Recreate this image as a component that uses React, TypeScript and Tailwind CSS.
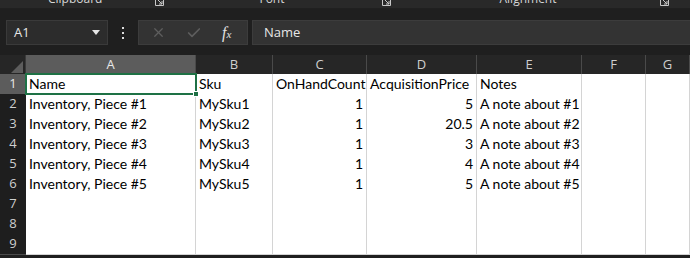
import { Check, X } from "lucide-react";

const COLS = ["A", "B", "C", "D", "E", "F", "G"];

const ROWS: string[][] = [
  ["Name", "Sku", "OnHandCount", "AcquisitionPrice", "Notes", "", ""],
  ["Inventory, Piece #1", "MySku1", "1", "5", "A note about #1", "", ""],
  ["Inventory, Piece #2", "MySku2", "1", "20.5", "A note about #2", "", ""],
  ["Inventory, Piece #3", "MySku3", "1", "3", "A note about #3", "", ""],
  ["Inventory, Piece #4", "MySku4", "1", "4", "A note about #4", "", ""],
  ["Inventory, Piece #5", "MySku5", "1", "5", "A note about #5", "", ""],
  ["", "", "", "", "", "", ""],
  ["", "", "", "", "", "", ""],
  ["", "", "", "", "", "", ""],
];

const GRID = "grid grid-cols-[26px_170px_77px_94px_110px_105px_64px_1fr]";

function isNumber(v: string) {
  return v !== "" && !isNaN(Number(v));
}

// little dialog launcher square in the ribbon group footer
function Launcher() {
  return (
    <svg width="9" height="9" viewBox="0 0 9 9" className="text-[#c8c8c8]">
      <path d="M0.5 0.5h8v8h-8z" fill="none" stroke="currentColor" />
      <path d="M3 3l4 4M7 4v3H4" fill="none" stroke="currentColor" />
    </svg>
  );
}

export default function App() {
  return (
    <div className="w-[690px] h-[258px] overflow-hidden bg-[#1f1f1f] font-['Open_Sans',sans-serif] select-none">
      {/* ribbon group labels, cut off at the top */}
      <div className="relative h-[9px] bg-[#292929] overflow-hidden text-[#d6d6d6] border-b border-[#202020]">
        <div className="flex items-start h-full">
          <span className="ml-[48px] -mt-[7px] text-[12px] leading-[12px]">Clipboard</span>
          <span className="ml-[53px] -mt-[3px]"><Launcher /></span>
          <span className="ml-[95px] -mt-[7px] text-[12px] leading-[12px]">Font</span>
          <span className="ml-[97px] -mt-[3px]"><Launcher /></span>
          <span className="ml-[109px] -mt-[7px] text-[12px] leading-[12px]">Alignment</span>
          <span className="ml-[103px] -mt-[3px]"><Launcher /></span>
        </div>
      </div>

      {/* formula bar */}
      <div className="flex items-center h-[46px] pt-[1px]">
        <div className="ml-[6px] w-[102px] h-[25px] bg-[#2c2c2c] border border-[#3a3a3a] flex items-center justify-between pl-[7px] pr-[7px] text-[#e6e6e6] text-[13px]">
          <span>A1</span>
          <svg width="8" height="5" viewBox="0 0 8 5">
            <path d="M0 0h8L4 5z" fill="#e6e6e6" />
          </svg>
        </div>
        <div className="w-[30px] flex flex-col items-center gap-[3px]">
          <div className="w-[2px] h-[2px] bg-[#dcdcdc]" />
          <div className="w-[2px] h-[2px] bg-[#dcdcdc]" />
          <div className="w-[2px] h-[2px] bg-[#dcdcdc]" />
        </div>
        <div className="w-[110px] h-[25px] bg-[#333333] border border-[#3c3c3c] flex items-center">
          <X size={15} strokeWidth={2} className="ml-[12px] text-[#5e5e5e]" />
          <Check size={16} strokeWidth={2.5} className="ml-[20px] text-[#5e5e5e]" />
          <span className="ml-[20px] text-[#e2e2e2] italic font-['Liberation_Serif',serif] text-[16px] leading-none">
            f<span className="text-[11px]">x</span>
          </span>
        </div>
        <div className="ml-[4px] flex-1 h-[25px] bg-[#333333] border border-[#3c3c3c] border-r-0 flex items-center pl-[11px] text-[#e6e6e6] text-[13px]">
          Name
        </div>
      </div>

      {/* sheet */}
      <div className="relative">
        <div className={`${GRID} h-[19px] bg-[#262626] text-[#cfcfcf] text-[13px]`}>
          <div className="relative border-r border-[#3a3a3a]">
            <svg width="12" height="12" viewBox="0 0 12 12" className="absolute right-[2px] bottom-[2px]">
              <path d="M12 0V12H0z" fill="#5d5d5d" />
            </svg>
          </div>
          {COLS.map((c) => (
            <div
              key={c}
              className={`flex items-center justify-center border-r border-[#4a4a4a] ${
                c === "A" ? "bg-[#5c5c5c] text-[#e8e8e8]" : ""
              }`}
            >
              {c}
            </div>
          ))}
        </div>

        {ROWS.map((row, r) => (
          <div key={r} className={`${GRID} h-[20px]`}>
            <div
              className={`flex items-center justify-center text-[13px] border-b border-[#4a4a4a] ${
                r === 0 ? "bg-[#5c5c5c] text-[#e8e8e8]" : "bg-[#1e1e1e] text-[#cfcfcf]"
              }`}
            >
              {r + 1}
            </div>
            {row.map((v, i) => (
              <div
                key={i}
                className={`bg-white border-r border-b border-[#d4d4d4] flex items-center px-[3px] text-black text-[14px] font-['Lato',sans-serif] whitespace-nowrap overflow-hidden ${
                  isNumber(v) ? "justify-end" : ""
                }`}
              >
                {v}
              </div>
            ))}
          </div>
        ))}

        {/* active cell A1 */}
        <div className="absolute left-[25px] top-[18px] w-[172px] h-[22px] border-2 border-[#1e7145]">
          <div className="absolute -right-[4px] -bottom-[4px] w-[6px] h-[6px] bg-[#1e7145] border border-white" />
        </div>
      </div>
    </div>
  );
}
